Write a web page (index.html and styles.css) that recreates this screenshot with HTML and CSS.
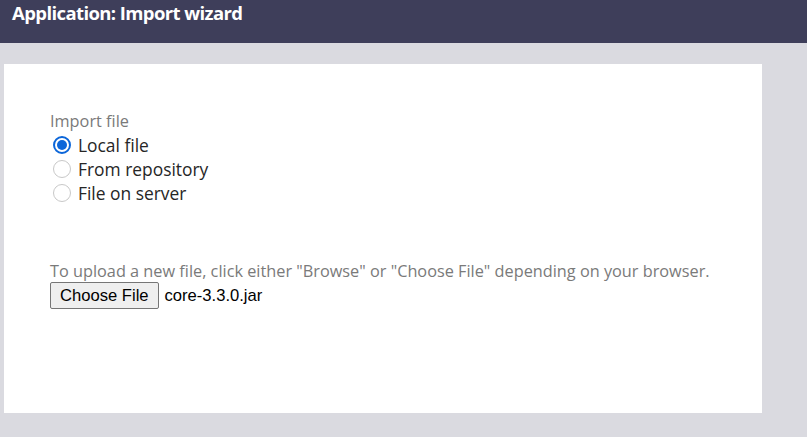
FILE: index.html
```html
<!DOCTYPE html>
<html>
<head>
<meta charset="utf-8">
<link rel="stylesheet" href="styles.css">
</head>
<body>
<header class="topbar"><h1 class="title">Application: Import wizard</h1></header>
<main class="area">
  <section class="panel">
    <div class="field-label">Import file</div>
    <label class="radio-row"><span class="radio checked"></span><span>Local file</span></label>
    <label class="radio-row"><span class="radio"></span><span>From repository</span></label>
    <label class="radio-row"><span class="radio"></span><span>File on server</span></label>
    <div class="hint">To upload a new file, click either "Browse" or "Choose File" depending on your browser.</div>
    <div class="file-row"><span class="file-btn">Choose File</span><span class="file-name">core-3.3.0.jar</span></div>
  </section>
</main>
</body>
</html>
```
FILE: styles.css
```css
* { box-sizing: border-box; }
html, body { margin: 0; padding: 0; }
body {
  width: 807px; height: 437px; overflow: hidden;
  background: #dadae0;
  font-family: "Open Sans", sans-serif;
}
.topbar {
  height: 43px;
  background: #3e3e5a;
  padding: 0 0 0 12px;
}
.title {
  margin: 0;
  color: #fff;
  font-size: 18.5px;
  font-weight: 700;
  line-height: 26px;
  letter-spacing: -0.6px;
}
.area { padding: 21px 45px 0 4px; }
.panel {
  background: #fff;
  height: 349px;
  padding: 45px 0 0 46px;
  color: #222;
  font-size: 16.3px;
}
.field-label { color: #7a7a7a; line-height: 24px; }
.radio-row { display: flex; align-items: center; gap: 7px; height: 24px; padding-left: 3px; font-size: 17.4px; color: #262626; }
.radio {
  width: 18px; height: 18px; border-radius: 50%;
  border: 1px solid #c8c8c8;
  flex: none;
  position: relative;
}
.radio.checked { border: 2px solid #0c66d9; }
.radio.checked::after {
  content: ""; position: absolute; left: 2px; top: 2px;
  width: 10px; height: 10px; border-radius: 50%; background: #0c66d9;
}
.hint { color: #7a7a7a; line-height: 24px; margin-top: 54px; }
.file-row { display: flex; align-items: center; gap: 6px; margin-top: -1px; font-family: "Liberation Sans", Arial, sans-serif; font-size: 16.6px; color: #000; }
.file-btn {
  height: 27px; padding: 0 9px; display: flex; align-items: center;
  background: #efefef; border: 1px solid #767676; border-radius: 2px;
}
```
